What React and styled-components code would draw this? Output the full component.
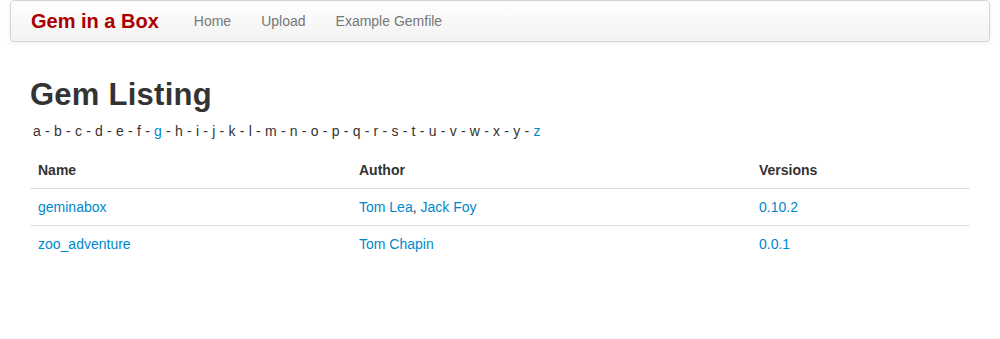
import styled, { createGlobalStyle } from 'styled-components';

const GlobalStyle = createGlobalStyle`
  body {
    margin: 0;
    background: #fff;
    color: #333;
    font-family: "Liberation Sans", Helvetica, Arial, sans-serif;
    font-size: 14px;
    line-height: 20px;
  }
  a {
    color: #0088cc;
    text-decoration: none;
  }
`;

const Navbar = styled.div`
  margin: 0 10px;
  height: 40px;
  display: flex;
  align-items: center;
  border: 1px solid #d4d4d4;
  border-radius: 4px;
  background-image: linear-gradient(to bottom, #ffffff, #f2f2f2);
  box-shadow: 0 1px 4px rgba(0, 0, 0, 0.065);
`;

const Brand = styled.a`
  padding: 10px 20px;
  font-size: 20px;
  line-height: 20px;
  font-weight: bold;
  color: #aa0000;
`;

const NavLink = styled.a`
  padding: 10px 15px;
  color: #777;
  font-size: 14px;
  line-height: 20px;
`;

const Container = styled.div`
  width: 940px;
  margin: 0 auto;
`;

const Title = styled.h1`
  margin: 35px 0 8px;
  font-size: 31px;
  line-height: 36px;
  font-weight: bold;
  letter-spacing: 0.25px;
  color: #333;
`;

const Letters = styled.p`
  margin: 0 0 11px;
  padding-left: 3px;
  letter-spacing: 0.18px;
`;

const Letter = styled.span`
  color: ${(p) => (p.$active ? '#0088cc' : '#333')};
`;

const Table = styled.table`
  width: 100%;
  border-collapse: collapse;
  border-spacing: 0;
`;

const Th = styled.th`
  padding: 8px;
  text-align: left;
  font-weight: bold;
  line-height: 20px;
  width: ${(p) => p.$w};
`;

const Td = styled.td`
  padding: 8px;
  line-height: 20px;
  border-top: 1px solid #ddd;
`;

const alphabet = 'abcdefghijklmnopqrstuvwxyz'.split('');
const withGems = ['g', 'z'];

const gems = [
  { name: 'geminabox', authors: ['Tom Lea', 'Jack Foy'], version: '0.10.2' },
  { name: 'zoo_adventure', authors: ['Tom Chapin'], version: '0.0.1' },
];

export default function App() {
  return (
    <>
      <GlobalStyle />
      <Navbar>
        <Brand href="#">Gem in a Box</Brand>
        <NavLink href="#">Home</NavLink>
        <NavLink href="#">Upload</NavLink>
        <NavLink href="#">Example Gemfile</NavLink>
      </Navbar>
      <Container>
        <Title>Gem Listing</Title>
        <Letters>
          {alphabet.map((l, i) => (
            <span key={l}>
              <Letter $active={withGems.includes(l)}>{l}</Letter>
              {i < alphabet.length - 1 ? ' - ' : ''}
            </span>
          ))}
        </Letters>
        <Table>
          <thead>
            <tr>
              <Th $w="305px">Name</Th>
              <Th $w="384px">Author</Th>
              <Th>Versions</Th>
            </tr>
          </thead>
          <tbody>
            {gems.map((g) => (
              <tr key={g.name}>
                <Td><a href="#">{g.name}</a></Td>
                <Td>
                  {g.authors.map((a, i) => (
                    <span key={a}>
                      {i > 0 ? ', ' : ''}
                      <a href="#">{a}</a>
                    </span>
                  ))}
                </Td>
                <Td><a href="#">{g.version}</a></Td>
              </tr>
            ))}
          </tbody>
        </Table>
      </Container>
    </>
  );
}
